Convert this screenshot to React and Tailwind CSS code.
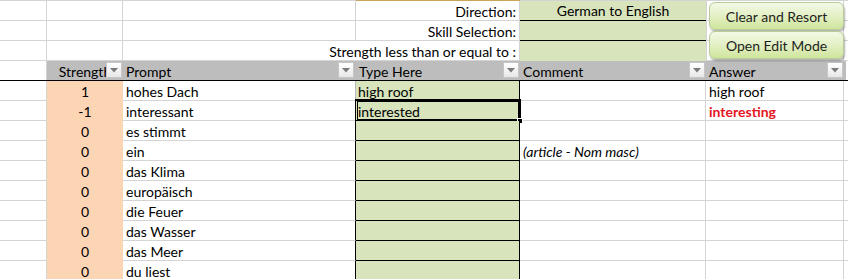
import React from "react";

const FONT = { fontFamily: "Lato, 'Liberation Sans', sans-serif" };

function DropDown() {
  return (
    <div className="absolute right-[1px] top-[1px] w-[16px] h-[16px] bg-gradient-to-b from-[#ffffff] to-[#e8e8e8] border border-[#c6c6c6] flex items-center justify-center">
      <svg width="8" height="5" viewBox="0 0 8 5">
        <path d="M0 0 L8 0 L4 4.5 Z" fill="#7a7a7a" />
      </svg>
    </div>
  );
}

const rows = [
  { s: "1", p: "hohes Dach", t: "high roof", c: "", a: "high roof", red: false },
  { s: "-1", p: "interessant", t: "interested", c: "", a: "interesting", red: true, sel: true },
  { s: "0", p: "es stimmt", t: "", c: "", a: "" },
  { s: "0", p: "ein", t: "", c: "(article - Nom masc)", a: "" },
  { s: "0", p: "das Klima", t: "", c: "", a: "" },
  { s: "0", p: "europäisch", t: "", c: "", a: "" },
  { s: "0", p: "die Feuer", t: "", c: "", a: "" },
  { s: "0", p: "das Wasser", t: "", c: "", a: "" },
  { s: "0", p: "das Meer", t: "", c: "", a: "" },
  { s: "0", p: "du liest", t: "", c: "", a: "" },
];

const top = [
  { label: "Direction:", value: "German to English", line: true },
  { label: "Skill Selection:", value: "", line: true },
  { label: "Strength less than or equal to :", value: "", line: false, wide: true },
];

export default function App() {
  return (
    <div className="relative w-[848px] h-[279px] overflow-hidden bg-white text-[14px] text-black leading-none" style={FONT}>
      {/* top gridline */}
      <div className="flex h-[1px]">
        <div className="w-[356px] bg-[#d4d4d4]" />
        <div className="w-[164px] bg-[#c9a45a]" />
        <div className="flex-1 bg-[#d4d4d4]" />
      </div>

      {/* rows 1-3 */}
      {top.map((r, i) => (
        <div key={i} className="flex h-[20px]">
          <div className="w-[47px] shrink-0 border-r border-b border-[#d4d4d4]" />
          <div className="w-[76px] shrink-0 border-r border-b border-[#d4d4d4]" />
          <div className={`w-[233px] shrink-0 border-b border-[#d4d4d4] ${r.wide ? "" : "border-r"}`} />
          <div className="w-[164px] shrink-0 border-r border-b border-[#d4d4d4] flex items-center justify-end pr-[3px] pt-[2px]">
            <span className="whitespace-nowrap">{r.label}</span>
          </div>
          <div className={`w-[186px] shrink-0 bg-[#d8e4bc] border-b ${r.line ? "border-black" : "border-[#d8e4bc]"} flex items-center justify-center pt-[1px]`}>
            <span className="whitespace-nowrap">{r.value}</span>
          </div>
          <div className="w-[138px] shrink-0 border-l border-r border-b border-[#d4d4d4]" />
          <div className="flex-1 border-b border-[#d4d4d4]" />
        </div>
      ))}

      {/* header row */}
      <div className="flex h-[20px] border-b border-black">
        <div className="w-[47px] shrink-0 border-r border-[#d4d4d4]" />
        <div className="w-[76px] shrink-0 relative bg-[#bdbdbd] flex items-center justify-center overflow-hidden pt-[2px]">
          <span className="whitespace-nowrap">Strength</span>
          <DropDown />
        </div>
        <div className="w-[233px] shrink-0 relative bg-[#bdbdbd] flex items-center pl-[3px] pt-[2px]">
          <span>Prompt</span>
          <div className="absolute right-[1px] top-0 h-full w-[17px]"><DropDown /></div>
        </div>
        <div className="w-[164px] shrink-0 relative bg-[#bdbdbd] flex items-center pl-[3px] pt-[2px]">
          <span>Type Here</span>
          <DropDown />
        </div>
        <div className="w-[186px] shrink-0 relative bg-[#bdbdbd] flex items-center pl-[3px] pt-[2px]">
          <span>Comment</span>
          <DropDown />
        </div>
        <div className="w-[138px] shrink-0 relative bg-[#bdbdbd] flex items-center pl-[3px] pt-[2px]">
          <span>Answer</span>
          <DropDown />
        </div>
        <div className="w-[2px] shrink-0 bg-[#bdbdbd]" />
        <div className="flex-1" />
      </div>

      {/* data rows */}
      {rows.map((r, i) => (
        <div key={i} className="flex h-[20px]">
          <div className="w-[47px] shrink-0 border-r border-b border-[#d4d4d4]" />
          <div className="w-[76px] shrink-0 bg-[#fcd5b4] flex items-center justify-center pt-[2px]">
            <span>{r.s}</span>
          </div>
          <div className={`w-[233px] shrink-0 border-r border-b border-b-[#d4d4d4] ${i === 0 ? "border-r-[#b8b8b8]" : "border-r-black"} flex items-center pl-[3px] pt-[2px]`}>
            <span className="whitespace-nowrap">{r.p}</span>
          </div>
          <div className="w-[164px] shrink-0 relative bg-[#d8e4bc] border-r border-b border-black flex items-center pl-[2px] pt-[2px]">
            <span className="whitespace-nowrap">{r.t}</span>
            {r.sel && (
              <>
                <div className="absolute -left-[1px] -top-[2px] -right-[2px] -bottom-[2px] border-[3px] border-double border-black pointer-events-none" />
                <div className="absolute -right-[4px] -bottom-[4px] w-[6px] h-[6px] bg-black border border-white" />
              </>
            )}
          </div>
          <div className="w-[186px] shrink-0 border-r border-b border-[#d4d4d4] flex items-center pl-[3px] pt-[2px]">
            <span className="whitespace-nowrap italic">{r.c}</span>
          </div>
          <div className="w-[138px] shrink-0 border-r border-b border-[#d4d4d4] flex items-center pl-[3px] pt-[2px]">
            <span className={`whitespace-nowrap ${r.red ? "font-bold text-[#e4151f]" : ""}`}>{r.a}</span>
          </div>
          <div className="flex-1 border-b border-[#d4d4d4]" />
        </div>
      ))}

      {/* floating buttons */}
      <button className="absolute left-[709px] top-[2px] w-[135px] h-[28px] rounded-[6px] border border-[#b9cc98] bg-gradient-to-b from-[#f3f9e6] via-[#e3f0c4] to-[#cfe59c] shadow-[1px_2px_2px_rgba(0,0,0,0.3)] flex items-center justify-center pt-[1px] text-[#1e1e1e] text-[14px]" style={FONT}>
        Clear and Resort
      </button>
      <button className="absolute left-[709px] top-[31px] w-[135px] h-[28px] rounded-[6px] border border-[#b9cc98] bg-gradient-to-b from-[#f3f9e6] via-[#e3f0c4] to-[#cfe59c] shadow-[1px_2px_2px_rgba(0,0,0,0.3)] flex items-center justify-center pt-[1px] text-[#1e1e1e] text-[14px]" style={FONT}>
        Open Edit Mode
      </button>
    </div>
  );
}
